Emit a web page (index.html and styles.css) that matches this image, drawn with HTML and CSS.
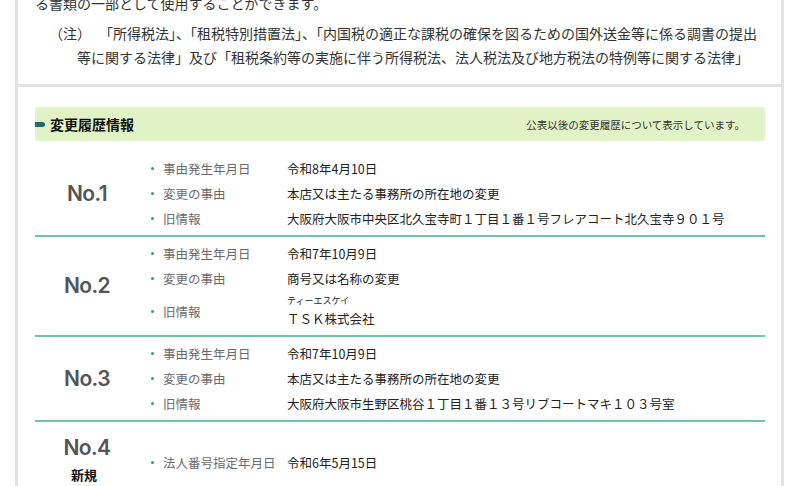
FILE: index.html
```html
<!DOCTYPE html>
<html lang="ja">
<head>
<meta charset="utf-8">
<title>変更履歴情報</title>
<link rel="stylesheet" href="styles.css">
</head>
<body>
<div class="frame">
  <section class="card card-intro">
    <p class="lead">る書類の一部として使用することができます。</p>
    <p class="note"><span class="note-mark">（注）</span>「所得税法」、「租税特別措置法」、「内国税の適正な課税の確保を図るための国外送金等に係る調書の提出等に関する法律」及び「租税条約等の実施に伴う所得税法、法人税法及び地方税法の特例等に関する法律」</p>
  </section>
  <section class="card card-history">
    <div class="bar">
      <h2 class="bar-title"><span class="bar-mark"></span>変更履歴情報</h2>
      <span class="bar-note">公表以後の変更履歴について表示しています。</span>
    </div>

    <div class="row">
      <div class="no"><span class="no-num">No.1</span></div>
      <ul class="items">
        <li class="item"><span class="dot"></span><span class="label">事由発生年月日</span><span class="value">令和8年4月10日</span></li>
        <li class="item"><span class="dot"></span><span class="label">変更の事由</span><span class="value">本店又は主たる事務所の所在地の変更</span></li>
        <li class="item"><span class="dot"></span><span class="label">旧情報</span><span class="value">大阪府大阪市中央区北久宝寺町１丁目１番１号フレアコート北久宝寺９０１号</span></li>
      </ul>
    </div>

    <div class="row">
      <div class="no"><span class="no-num">No.2</span></div>
      <ul class="items">
        <li class="item"><span class="dot"></span><span class="label">事由発生年月日</span><span class="value">令和7年10月9日</span></li>
        <li class="item"><span class="dot"></span><span class="label">変更の事由</span><span class="value">商号又は名称の変更</span></li>
        <li class="item item-tall"><span class="dot"></span><span class="label">旧情報</span><span class="value value-ruby"><span class="furigana">ティーエスケイ</span><span class="base">ＴＳＫ株式会社</span></span></li>
      </ul>
    </div>

    <div class="row">
      <div class="no"><span class="no-num">No.3</span></div>
      <ul class="items">
        <li class="item"><span class="dot"></span><span class="label">事由発生年月日</span><span class="value">令和7年10月9日</span></li>
        <li class="item"><span class="dot"></span><span class="label">変更の事由</span><span class="value">本店又は主たる事務所の所在地の変更</span></li>
        <li class="item"><span class="dot"></span><span class="label">旧情報</span><span class="value">大阪府大阪市生野区桃谷１丁目１番１３号リブコートマキ１０３号室</span></li>
      </ul>
    </div>

    <div class="row row-last">
      <div class="no no-new"><span class="no-num">No.4</span><span class="no-tag">新規</span></div>
      <ul class="items items-new">
        <li class="item"><span class="dot"></span><span class="label">法人番号指定年月日</span><span class="value">令和6年5月15日</span></li>
      </ul>
    </div>
  </section>
</div>
</body>
</html>
```
FILE: styles.css
```css
* { box-sizing: border-box; }
html, body {
  margin: 0;
  padding: 0;
  background: #ffffff;
  overflow: hidden;
}
body {
  font-family: "Noto Sans CJK JP", "Noto Sans", sans-serif;
  color: #333333;
}
.frame {
  margin-left: 15px;
  width: 769px;
  border-left: 3px solid #e2e2e2;
  border-right: 3px solid #e2e2e2;
}
.card-intro {
  margin-top: -9px;
  padding: 0 16px 15px 17px;
  border-bottom: 3px solid #e2e2e2;
}
.lead {
  margin: 0;
  font-size: 14px;
  line-height: 24px;
}
.note {
  margin: 6px 0 0;
  padding-left: 42px;
  text-indent: -28px;
  font-size: 14px;
  line-height: 24px;
}
.note-mark {
  display: inline-block;
  text-indent: 0;
  width: 42px;
  margin-right: 8px;
}
.card-history {
  padding: 20px 16px 40px 17px;
}
.bar {
  display: flex;
  align-items: center;
  justify-content: space-between;
  height: 34px;
  background: #e1f2c7;
  border-radius: 3px;
  padding-right: 20px;
  margin-bottom: 11px;
}
.bar-title {
  display: flex;
  align-items: center;
  margin: 0;
  font-size: 14px;
  font-weight: 700;
  color: #111111;
}
.bar-mark {
  width: 10px;
  height: 5px;
  border-radius: 0 3px 3px 0;
  background: #1f6a6a;
  margin-right: 5px;
}
.bar-note {
  font-size: 10.5px;
  color: #333333;
}
.row {
  display: flex;
  align-items: center;
  padding: 4px 0;
  border-bottom: 2px solid #72c4a1;
}
.row-last {
  border-bottom: none;
  padding-top: 13px;
}
.no {
  width: 104px;
  flex: none;
  display: flex;
  flex-direction: column;
  align-items: center;
}
.no-num {
  font-family: "Inter", "Liberation Sans", sans-serif;
  font-weight: 600;
  font-size: 21px;
  letter-spacing: -0.6px;
  line-height: 26px;
  color: #555555;
}
.no-tag {
  margin-top: 4px;
  margin-right: 6px;
  font-size: 13px;
  font-weight: 700;
  line-height: 20px;
  color: #111111;
}
.items {
  list-style: none;
  margin: 0;
  padding: 0;
  flex: 1;
}
.items-new {
  padding-top: 4px;
}
.item {
  display: flex;
  align-items: center;
  height: 25px;
  font-size: 12.5px;
}
.item-tall {
  height: 40px;
}
.dot {
  flex: none;
  width: 3px;
  height: 3px;
  border-radius: 50%;
  background: #2f9d76;
  margin-left: 12px;
  margin-right: 9px;
}
.label {
  flex: none;
  width: 124px;
  color: #6a6a6a;
  white-space: nowrap;
}
.value {
  color: #222222;
  white-space: nowrap;
}
.value-ruby {
  display: flex;
  flex-direction: column;
  padding-top: 4px;
}
.furigana {
  font-size: 9px;
  line-height: 12px;
}
.base {
  line-height: 24px;
}
```
